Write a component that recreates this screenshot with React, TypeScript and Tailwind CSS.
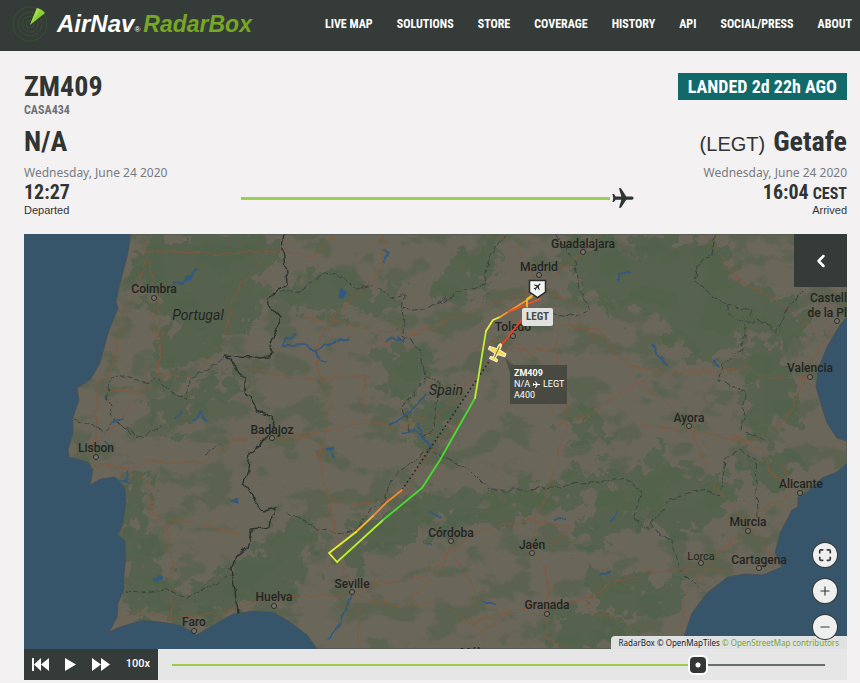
import { ChevronLeft, Maximize, Minus, Plus } from "lucide-react";
import { IoMdAirplane } from "react-icons/io";

const navItems = ["LIVE MAP", "SOLUTIONS", "STORE", "COVERAGE", "HISTORY", "API", "SOCIAL/PRESS", "ABOUT"];

const places = [
  { name: "Coimbra", x: 154, y: 293, dotX: 154, dotY: 298 },
  { name: "Lisbon", x: 96, y: 452, dotX: 96, dotY: 457 },
  { name: "Badajoz", x: 272, y: 434, dotX: 272, dotY: 438 },
  { name: "Guadalajara", x: 583, y: 248, dotX: 583, dotY: 252 },
  { name: "Madrid", x: 539, y: 271, dotX: 539, dotY: 275 },
  { name: "Toledo", x: 513, y: 331, dotX: 513, dotY: 336 },
  { name: "Valencia", x: 810, y: 372, dotX: 810, dotY: 377 },
  { name: "Ayora", x: 689, y: 422, dotX: 689, dotY: 426 },
  { name: "Alicante", x: 801, y: 488, dotX: 800, dotY: 493 },
  { name: "Murcia", x: 748, y: 526, dotX: 748, dotY: 531 },
  { name: "Cartagena", x: 759, y: 564, dotX: 759, dotY: 568 },
  { name: "Córdoba", x: 451, y: 537, dotX: 451, dotY: 541 },
  { name: "Jaén", x: 532, y: 549, dotX: 532, dotY: 553 },
  { name: "Granada", x: 547, y: 609, dotX: 547, dotY: 614 },
  { name: "Seville", x: 352, y: 588, dotX: 352, dotY: 592 },
  { name: "Huelva", x: 274, y: 601, dotX: 274, dotY: 606 },
  { name: "Faro", x: 194, y: 626, dotX: 194, dotY: 631 },
];

const land =
  "M131 234 127 257 120 283 116 302 118 308 108 333 100 363 90 380 77 388 79 400 73 417 73 433 68 450 69 457 88 462 93 470 90 485 101 479 115 477 125 488 126 503 123 523 118 535 125 540 126 557 124 573 124 590 118 603 117 617 109 632 120 627 143 620 167 623 180 625 197 635 210 627 233 614 255 611 273 612 290 622 307 635 317 649 683 649 685 634 692 613 707 593 728 577 745 574 763 575 782 567 775 553 780 533 787 520 792 510 798 507 798 497 807 492 822 478 837 472 847 463 847 441 837 438 827 423 822 407 816 387 818 370 827 347 840 325 847 317 847 234Z";

const forests = [
  "M150 234 265 234 275 260 262 290 250 300 255 330 225 345 190 365 160 375 158 345 172 320 150 290 128 290 135 262Z",
  "M160 378 200 385 222 370 255 385 205 402 190 430 160 425 150 400Z",
  "M127 480 148 484 146 520 158 560 170 590 240 565 300 515 318 535 312 560 290 595 240 608 210 618 160 610 118 618 127 580Z",
  "M285 290 335 268 360 290 400 285 395 315 350 310 300 318Z",
  "M380 340 420 345 432 375 410 400 385 385Z",
  "M640 234 725 234 735 280 795 300 815 330 790 350 745 320 720 370 690 355 655 320 635 290Z",
  "M740 340 770 345 800 390 795 420 765 440 742 420 748 380Z",
  "M570 470 620 480 640 470 660 450 690 480 660 510 620 530 600 550 575 545 585 510Z",
  "M430 485 500 500 540 480 630 475 610 498 540 505 500 525 450 520 395 545 370 560 340 570 330 545 400 505Z",
  "M545 616 600 610 635 640 600 649 555 649Z",
  "M505 234 480 300 440 305 430 280 470 250Z",
  "M556 250 600 240 660 260 700 330 640 310 590 300Z",
  "M660 460 700 470 745 490 720 520 690 540 650 525Z",
  "M740 460 790 450 800 475 765 490Z",
  "M590 580 640 575 690 590 660 620 600 610Z",
  "M420 400 450 410 460 440 430 450 405 435Z",
  "M565 420 600 415 615 435 590 450Z",
];

const roads = [
  "M131 250 180 252 225 254 290 250 310 258 335 234",
  "M145 240 150 270 158 300 162 330 158 376",
  "M145 260 138 290 125 305 118 345 110 370 95 390 97 430 90 455",
  "M158 376 190 376 210 360 225 340 232 300 240 286 270 250",
  "M95 388 140 392 158 376 160 350 150 310",
  "M96 440 118 425 140 395",
  "M92 465 130 468 150 462 200 463 235 440 272 438 290 441 325 430 380 422 400 428 425 415",
  "M272 438 325 430 330 400 318 370 316 345 340 310 365 288 380 270 385 234",
  "M298 318 345 322 390 332 420 333 460 315 500 300 537 290",
  "M420 333 380 345 370 360 362 395 365 420",
  "M250 368 290 378 340 378 365 376",
  "M325 430 320 460 328 500 335 530 340 560 350 590",
  "M328 500 370 505 400 495 440 440 460 420",
  "M125 474 148 480 150 512 165 525 173 560 170 615",
  "M150 515 190 522 240 535",
  "M120 618 140 613 175 618 225 612 270 597 350 595 375 584 400 582 425 576 445 556 470 535 500 525 535 520 545 500 555 468 566 430 562 390 555 345 560 325",
  "M352 592 360 610 358 649",
  "M352 592 372 600 400 606 440 602 460 615 470 625 500 612 550 605",
  "M451 545 460 565 475 590 470 625",
  "M451 545 440 570 420 590 400 606",
  "M535 520 532 553 545 565 548 590 545 612",
  "M535 520 570 528 550 545",
  "M549 605 590 598 610 585 650 572 700 568 728 572",
  "M585 598 590 612 620 618 640 640",
  "M548 612 545 635 565 649",
  "M478 636 500 620",
  "M537 290 560 270 583 252 600 234",
  "M537 290 528 262 505 240 485 234",
  "M537 290 510 310 513 336 540 365 556 420",
  "M537 290 570 300 590 335 630 365 660 372 705 371 745 367 770 378 810 377",
  "M560 325 600 330 640 385 662 400 687 423 700 449",
  "M420 460 440 415 480 370 500 350 555 350",
  "M556 425 590 415 625 390 645 380",
  "M640 425 690 430 730 438 755 440 785 420 800 390 810 365 820 345 840 315",
  "M730 438 760 450 770 470 790 490",
  "M705 234 740 282 760 290 790 310 815 330",
  "M735 265 740 285",
  "M513 336 470 350 440 360",
  "M748 530 720 550 705 570",
  "M748 530 760 510 790 495",
  "M700 450 710 480 740 515 760 540 775 560",
  "M705 570 685 595 680 630",
  "M780 462 798 495",
];

const regionBorders = [
  "M112 378 125 376 145 382 160 379 170 392 185 400 190 380 227 356",
  "M112 378 107 395 112 415 125 430 145 436 160 425",
  "M75 420 90 425 105 432 115 420 130 435",
  "M126 591 150 594 165 588 185 599 220 580 236 572",
  "M280 292 300 292 325 272 345 278 357 290 375 285 390 298 404 294 403 335 420 350 425 375 440 385 433 430 420 440",
  "M404 310 425 308 440 302 460 292 485 285 490 255 505 234",
  "M555 234 575 260 580 290 590 310 575 316 550 314",
  "M286 512 300 518 320 528 340 534 358 530 370 510 385 500 390 480 420 455 430 450 470 470 490 490 530 490 560 486 600 482 628 478 642 495 634 520 650 530",
  "M715 234 712 255 700 258 695 280 712 295 725 305 750 310 748 322 740 352 722 365 718 380 745 393 742 430 765 440",
  "M725 305 735 320 765 322 775 334 790 305 805 290",
  "M650 525 670 540 680 570 700 590",
  "M650 525 670 500 700 490 720 495 725 460 740 450 756 460 758 515",
  "M205 453 220 445",
  "M410 430 402 410 430 370",
];

const lakes = [
  "M280 347 285 338 297 333M282 346 300 344 315 349 350 338M315 349 320 360 327 363",
  "M385 340 405 339M398 336 404 342",
  "M383 250 388 254 383 262",
  "M390 425 410 413 420 400 428 395",
  "M402 432 415 430 432 447M418 424 424 440",
  "M328 449 335 458M326 450 334 449",
  "M174 282 182 284 198 268",
  "M112 423 124 418M174 420 182 410M192 421 200 412 207 421",
  "M653 343 658 355 668 366",
  "M618 282 620 272 632 274",
  "M714 360 719 366",
  "M554 519 567 517M610 522 617 510M600 575 610 572M485 603 495 606",
  "M152 580 163 576M126 470 128 484M104 440 110 450",
  "M352 595 344 615 340 625 327 640",
  "M430 512 440 520M425 544 432 546M118 482 132 484",
];

const track = [
  { color: "#f08a2c", d: "M402 490 387 502 373 516" },
  { color: "#f2b52b", d: "M373 516 356 532" },
  { color: "#e5ee2d", d: "M356 532 329 553 337 562" },
  { color: "#b6ee2c", d: "M337 562 360 541 383 520" },
  { color: "#45de2b", d: "M383 520 422 488 440 460 475 398" },
  { color: "#b9ef34", d: "M475 398 486 331" },
  { color: "#eaf03a", d: "M486 331 493 320 500 317" },
  { color: "#f39a2c", d: "M500 317 532 297" },
  { color: "#ef5028", d: "M508 312 540 299" },
  { color: "#f4b62d", d: "M534 294 527 299 527 308" },
  { color: "#ee3f24", d: "M527 308 523 318 500 347" },
];

function RadarLogo() {
  return (
    <svg viewBox="0 0 36 36" className="size-9 shrink-0" fill="none" aria-hidden="true">
      <g stroke="#36522f">
        <circle cx="18" cy="18" r="17" />
        <circle cx="18" cy="18" r="12" />
        <circle cx="18" cy="18" r="8" />
        <circle cx="18" cy="18" r="4" />
      </g>
      <path d="M18 19 25 2Q30 3 33 7Z" fill="#8bd133" />
      <path d="M18 19 25 2 28 4Z" fill="#a5df4d" />
    </svg>
  );
}

function MapCanvas() {
  return (
    <svg
      viewBox="24 234 823 415"
      preserveAspectRatio="xMidYMid slice"
      className="block h-full w-full font-[Roboto,sans-serif]"
      role="img"
      aria-label="Flight track map"
    >
      <defs>
        <clipPath id="land">
          <path d={land} />
        </clipPath>
        <filter id="rough" x="-5%" y="-5%" width="110%" height="110%">
          <feTurbulence type="fractalNoise" baseFrequency="0.06" numOctaves="4" seed="4" />
          <feDisplacementMap in="SourceGraphic" scale="60" xChannelSelector="R" yChannelSelector="G" />
        </filter>
        <filter id="wiggle" x="-5%" y="-5%" width="110%" height="110%" colorInterpolationFilters="sRGB">
          <feTurbulence type="fractalNoise" baseFrequency="0.09" numOctaves="2" seed="9" />
          <feDisplacementMap in="SourceGraphic" scale="8" xChannelSelector="R" yChannelSelector="G" />
        </filter>
        <filter id="scrub" x="0" y="0" width="100%" height="100%" colorInterpolationFilters="sRGB">
          <feTurbulence type="fractalNoise" baseFrequency="0.03 0.045" numOctaves="5" seed="12" />
          <feColorMatrix values="0 0 0 0 0.32  0 0 0 0 0.385  0 0 0 0 0.29  9 0 0 0 -4.7" />
        </filter>
      </defs>
      <rect x="24" y="234" width="823" height="415" fill="#36546a" />
      <path d={land} fill="#6a665a" stroke="#4a5157" />
      <g clipPath="url(#land)">
        <rect x="24" y="234" width="823" height="415" filter="url(#scrub)" opacity="0.6" />
        <g filter="url(#rough)" fill="#4f624a" opacity="0.7">
          {forests.map((d) => (
            <path key={d} d={d} />
          ))}
        </g>
        <g filter="url(#wiggle)" fill="none">
          <g stroke="#85593c" opacity="0.9">
            {roads.map((d) => (
              <path key={d} d={d} />
            ))}
          </g>
          <g stroke="#3a4440" strokeDasharray="6 2">
            {regionBorders.map((d) => (
              <path key={d} d={d} />
            ))}
          </g>
          <g stroke="#34597d" strokeWidth="2">
            {lakes.map((d) => (
              <path key={d} d={d} />
            ))}
            <path d="M340 288 345 293 342 297 337 296Z" fill="#2f568d" />
            <path d="M232 501 237 499 237 503Z" fill="#2f568d" />
          </g>
          <path
            d="M285 234 283 250 287 283 269 297 270 306 281 318 272 345 269 356 250 358 227 356 240 373 245 378 245 390 252 403 258 413 272 415 273 423 267 437 250 453 248 470 244 483 263 512 275 508 271 527 251 530 247 547 235 557 231 570 235 590 237 615"
            stroke="#2b332e"
            strokeWidth="1.4"
          />
        </g>
      </g>

      <g fill="#232522" fontSize="12" fontWeight="500" textAnchor="middle">
        {places.map((p) => (
          <g key={p.name}>
            <circle cx={p.dotX} cy={p.dotY} r="2.5" fill="#77746a" stroke="#2b2d29" />
            <text x={p.x} y={p.y}>
              {p.name}
            </text>
          </g>
        ))}
        <circle cx="701" cy="563" r="2.5" fill="#77746a" stroke="#2b2d29" />
        <text x="701" y="560" fontSize="11" fontWeight="400">
          Lorca
        </text>
        <circle cx="837" cy="321" r="2.5" fill="#77746a" stroke="#2b2d29" />
        <text x="847" y="302" textAnchor="end">
          Castell
        </text>
        <text x="847" y="317" textAnchor="end">
          de la Pl
        </text>
        <text x="480" y="657">Málaga</text>
        <g fontSize="14" fontStyle="italic" fontWeight="400">
          <text x="198" y="320">
            Portugal
          </text>
          <text x="446" y="395">
            Spain
          </text>
        </g>
      </g>

      <path d="M402 490 490 360" stroke="#1f2420" strokeWidth="1.6" strokeDasharray="1.5 3" />
      <g fill="none" strokeWidth="1.8" strokeLinecap="round" strokeLinejoin="round">
        {track.map((leg) => (
          <path key={leg.d} d={leg.d} stroke={leg.color} />
        ))}
      </g>

      {/* arrival airport pin */}
      <path d="M529.5 280.5H545.5V292L537.5 297.5 529.5 292Z" fill="#f4f4f2" stroke="#2a2f2c" strokeWidth="1.5" />
      <g transform="translate(537.5 286.5) rotate(45)">
        <IoMdAirplane x={-5} y={-5} size={10} color="#2a2f2c" />
      </g>

      {/* aircraft */}
      <g transform="translate(497 352) rotate(25)">
        <path
          d="M0-9Q1.5-9 1.5-6V-3L9-2V1L1.5 2 1 6 4 7V9H-4V7L-1 6-1.5 2-9 1V-2L-1.5-3V-6Q-1.5-9 0-9Z"
          fill="#f5da58"
          stroke="#fdf7d4"
        />
        <path d="M0-6V6" stroke="#6f5d21" strokeWidth="0.8" />
      </g>
      <path d="M505 358 510 373 515 366Z" fill="#3f443d" opacity="0.6" />
    </svg>
  );
}

const roundButton =
  "flex size-6 items-center justify-center rounded-full bg-[#efeff0] text-[#353b38] ring-1 ring-[#353b38]";

function FlightMap() {
  return (
    <section className="relative h-[415px] overflow-hidden">
      <MapCanvas />

      <div className="absolute left-[498px] top-[74px] rounded-xs bg-[#e1e1df] px-1 font-['Roboto_Condensed','Roboto',sans-serif] text-[11px] leading-[18px] font-bold text-[#454a47]">
        LEGT
      </div>
      <div className="absolute left-[486px] top-[131px] w-[57px] bg-[#484a41] px-1 py-[3px] font-['Roboto',sans-serif] text-[9px] leading-[11px] whitespace-nowrap text-white">
        <div className="font-bold">ZM409</div>
        <div className="flex items-center gap-[2px]">
          N/A <IoMdAirplane className="size-[9px] shrink-0 rotate-90" /> LEGT
        </div>
        <div>A400</div>
      </div>

      <button
        type="button"
        aria-label="Open panel"
        className="absolute top-0 right-0 flex size-[53px] items-center justify-center bg-[#353b38] text-white"
      >
        <ChevronLeft className="size-5" strokeWidth={3} />
      </button>

      <div className="absolute right-0 bottom-0 rounded-tl bg-[#dfe1e2] pr-2 pl-2 font-['Noto_Sans',sans-serif] text-[8px] leading-[13px] text-[#222]">
        RadarBox © OpenMapTiles{" "}
        <a href="#osm" className="text-[#78a82c]">
          © OpenStreetMap contributors
        </a>
      </div>

      <div className="absolute right-[10px] bottom-[10px] flex flex-col gap-3">
        <button type="button" aria-label="Full screen" className={roundButton}>
          <Maximize className="size-[14px]" strokeWidth={3} />
        </button>
        <button type="button" aria-label="Zoom in" className={roundButton}>
          <Plus className="size-[14px]" />
        </button>
        <button type="button" aria-label="Zoom out" className={roundButton}>
          <Minus className="size-[14px]" />
        </button>
      </div>
    </section>
  );
}

function Playback() {
  return (
    <div className="flex h-[31px] bg-[#e7e6e7]">
      <div className="flex w-[134px] items-center justify-between bg-[#353b38] px-2 text-white">
        <button type="button" aria-label="Restart">
          <svg viewBox="0 0 17 13" className="h-[13px] w-[17px]" fill="currentColor">
            <path d="M0 0H2V13H0ZM9 0V13L2 6.5ZM17 0V13L9 6.5Z" />
          </svg>
        </button>
        <button type="button" aria-label="Play">
          <svg viewBox="0 0 11 13" className="h-[13px] w-[11px]" fill="currentColor">
            <path d="M0 0 11 6.5 0 13Z" />
          </svg>
        </button>
        <button type="button" aria-label="Fast forward">
          <svg viewBox="0 0 18 13" className="h-[13px] w-[18px]" fill="currentColor">
            <path d="M0 0 9 6.5 0 13ZM9 0 18 6.5 9 13Z" />
          </svg>
        </button>
        <button type="button" className="font-['Roboto',sans-serif] text-[11px] font-medium">
          100x
        </button>
      </div>
      <div className="flex flex-1 items-center pr-[22px] pl-[14px]">
        <input
          type="range"
          aria-label="Playback position"
          max={200}
          defaultValue={163}
          className="h-5 w-full appearance-none bg-[linear-gradient(90deg,#a2c94f_81%,#686d70_81%)] bg-[length:100%_2px] bg-center bg-no-repeat [&::-webkit-slider-thumb]:size-5 [&::-webkit-slider-thumb]:appearance-none [&::-webkit-slider-thumb]:rounded-md [&::-webkit-slider-thumb]:border-2 [&::-webkit-slider-thumb]:border-white [&::-webkit-slider-thumb]:bg-[radial-gradient(circle,#ffffff_2px,#333836_3px)]"
        />
      </div>
    </div>
  );
}

const condensed = "font-['Roboto_Condensed','Roboto',sans-serif] font-bold";

export default function App() {
  return (
    <div className="min-h-screen bg-[#f3f1f2] font-['Liberation_Sans',sans-serif] text-[#303432]">
      <header className="flex h-[51px] items-center justify-between bg-[#353b38] pr-2 pb-[3px] pl-3">
        <a href="#home" className="flex items-center gap-[9px] whitespace-nowrap italic">
          <RadarLogo />
          <span className="flex items-baseline text-2xl font-bold text-white">
            AirNav
            <span className="pr-[3px] text-[8px] font-normal not-italic">®</span>
            <span className="text-[23px] text-[#76a823]">RadarBox</span>
          </span>
        </a>
        <nav className={`flex gap-6 text-xs whitespace-nowrap text-white ${condensed}`}>
          {navItems.map((item) => (
            <a key={item} href="#nav">
              {item}
            </a>
          ))}
        </nav>
      </header>

      <main className="pr-[13px] pl-6">
        <div className={`flex items-start justify-between pt-[19px] ${condensed}`}>
          <div>
            <h1 className="text-[28px] leading-[33px]">ZM409</h1>
            <p className="text-xs leading-[14px] text-[#6d7277]">CASA434</p>
          </div>
          <p className="mt-[3px] bg-[#12696a] px-[10px] text-lg leading-[27px] text-white">LANDED 2d 22h AGO</p>
        </div>

        <div className="grid grid-cols-[217px_1fr_211px] items-end pt-[9px]">
          <div>
            <h2 className={`text-[28px] leading-8 ${condensed}`}>N/A</h2>
            <p className="pt-[5px] font-['Noto_Sans',sans-serif] text-xs leading-[19px] text-[#777b80]">
              Wednesday, June 24 2020
            </p>
            <p className={`text-xl leading-5 ${condensed}`}>12:27</p>
            <p className="text-[11px] leading-4">Departed</p>
          </div>
          <div className="flex items-center pb-[7px]">
            <span className="h-[3px] flex-1 bg-[#9ccd55]" />
            <IoMdAirplane className="size-[26px] rotate-90" />
          </div>
          <div className="text-right">
            <h2 className="flex h-8 items-baseline justify-end gap-2 text-xl leading-8 whitespace-nowrap">
              (LEGT) <span className={`text-[28px] leading-8 ${condensed}`}>Getafe</span>
            </h2>
            <p className="pt-[5px] font-['Noto_Sans',sans-serif] text-xs leading-[19px] text-[#777b80]">
              Wednesday, June 24 2020
            </p>
            <p className={`flex h-5 items-baseline justify-end gap-1 text-xl leading-5 ${condensed}`}>
              16:04 <span className="text-base leading-5">CEST</span>
            </p>
            <p className="text-[11px] leading-4">Arrived</p>
          </div>
        </div>

        <div className="pt-4">
          <FlightMap />
          <Playback />
        </div>
      </main>
    </div>
  );
}
